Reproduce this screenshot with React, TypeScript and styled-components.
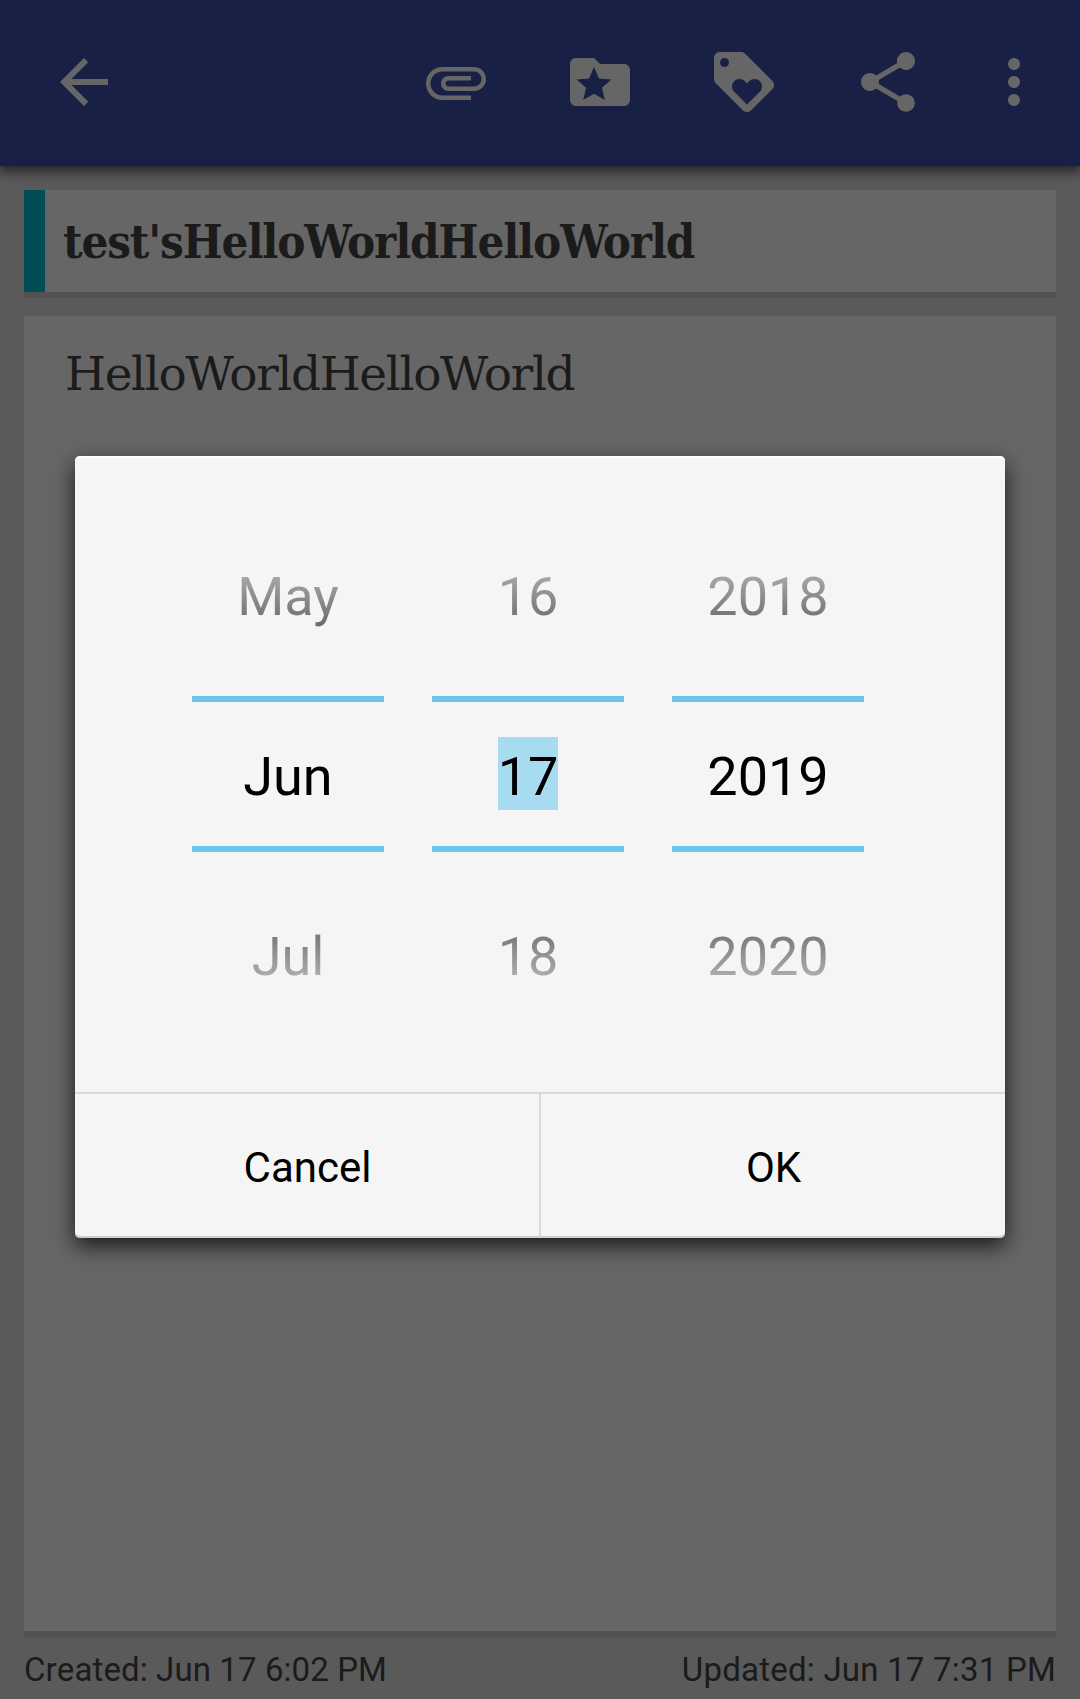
import React from "react";
import styled, { createGlobalStyle } from "styled-components";

const Global = createGlobalStyle`
  * { box-sizing: border-box; }
  body { margin: 0; background: #5a5a5a; font-family: Roboto, sans-serif; }
`;

const Screen = styled.div`
  position: relative;
  width: 1080px;
  height: 1699px;
  overflow: hidden;
  display: flex;
  flex-direction: column;
  background: #5a5a5a;
  color: #1b1b1b;
`;

const AppBar = styled.header`
  flex: none;
  height: 166px;
  display: flex;
  align-items: center;
  padding: 0 30px 2px 48px;
  background: #192046;
  box-shadow: 0 3px 12px 2px rgba(0, 0, 0, 0.66);
`;

const Actions = styled.nav`
  display: flex;
  gap: 72px;
  margin-left: auto;
  margin-right: 54px;
`;

const IconButton = styled.button`
  display: block;
  width: 72px;
  height: 72px;
  padding: 0;
  border: 0;
  background: none;
  color: #666;
`;

const Glyph = styled.svg`
  display: block;
  width: 72px;
  height: 72px;
  fill: currentColor;
`;

const Note = styled.main`
  flex: 1;
  display: flex;
  flex-direction: column;
  padding: 24px 24px 0;
`;

const Card = styled.section`
  background: #666;
  border-bottom: 6px solid #525252;
`;

const TitleCard = styled(Card)`
  display: flex;
  height: 108px;
  margin-bottom: 18px;
`;

const ColorTag = styled.div`
  width: 21px;
  background: #004d57;
`;

const Title = styled.h1`
  margin: 0;
  padding: 17px 0 0 18px;
  font: 700 47px/70px "Roboto Slab", "DejaVu Serif", serif;
  font-stretch: condensed;
  white-space: nowrap;
  letter-spacing: -1.12px;
`;

const BodyCard = styled(Card)`
  height: 1321px;
`;

const BodyText = styled.p`
  margin: 0;
  padding: 23px 0 0 41px;
  font: 400 47px/70px "Roboto Slab", "DejaVu Serif", serif;
  white-space: nowrap;
  letter-spacing: -1.35px;
`;

const Footer = styled.footer`
  display: flex;
  justify-content: space-between;
  padding-top: 13px;
  font-size: 33px;
  line-height: 40px;
  font-kerning: none;
`;

const Stamp = styled.span<{ $tracking: number }>`
  letter-spacing: ${(p) => p.$tracking}px;
`;

const Dialog = styled.div`
  position: absolute;
  left: 75px;
  top: 456px;
  width: 930px;
  height: 782px;
  display: flex;
  flex-direction: column;
  border-radius: 5px;
  background: #f5f5f5;
  color: #000;
  box-shadow: inset 0 2px 0 #fff, inset 0 -2px 0 #cecece,
    0 8px 21px rgba(0, 0, 0, 0.74);
`;

const Pickers = styled.div`
  height: 636px;
  display: flex;
  gap: 48px;
  padding: 48px 0 0 117px;
`;

const Wheel = styled.div`
  width: 192px;
  height: 540px;
  display: flex;
  flex-direction: column;
  align-items: stretch;
  font-size: 54px;
`;

const Neighbour = styled.div<{ $fade: "top" | "bottom" }>`
  height: 180px;
  display: flex;
  justify-content: center;
  align-items: center;
  mask-image: linear-gradient(to ${(p) => p.$fade}, rgba(0, 0, 0, 0.85), transparent 96%);
`;

const Current = styled.div`
  height: 156px;
  margin: 12px 0;
  display: flex;
  justify-content: center;
  align-items: center;
  border: solid #6bc6ea;
  border-width: 6px 0;
`;

const Value = styled.span<{ $selected?: boolean }>`
  height: 73px;
  margin-bottom: 1px;
  padding-top: 4px;
  line-height: 72px;
  background: ${(p) => (p.$selected ? "#a7dbef" : "transparent")};
`;

const Buttons = styled.div`
  flex: 1;
  display: flex;
  border-top: 2px solid #dadada;
`;

const DialogButton = styled.button`
  flex: 1;
  padding: 2px 0 0 1px;
  border: 0;
  background: none;
  color: #000;
  font: 400 42px Roboto, sans-serif;

  & + & {
    border-left: 2px solid #dadada;
  }
`;

const ICONS = {
  back: "M20 11H7.83l5.59-5.59L12 4l-8 8 8 8 1.41-1.41L7.83 13H20v-2z",
  attachment:
    "M7.5 18C4.46 18 2 15.54 2 12.5S4.46 7 7.5 7H18c2.21 0 4 1.79 4 4s-1.79 4-4 4H9.5C8.12 15 7 13.88 7 12.5S8.12 10 9.5 10H17v1.5H9.5c-.55 0-1 .45-1 1s.45 1 1 1H18c1.38 0 2.5-1.12 2.5-2.5S19.38 8.5 18 8.5H7.5c-2.21 0-4 1.79-4 4s1.79 4 4 4H17V18H7.5z",
  folderStar:
    "M20 6h-8l-2-2H4c-1.1 0-2 .9-2 2v12c0 1.1.9 2 2 2h16c1.1 0 2-.9 2-2V8c0-1.1-.9-2-2-2zM13.6 18L10 15.9 6.4 18l.95-4.1L4.2 11.15l4.15-.35L10 7l1.65 3.8 4.15.35-3.15 2.75z",
  loyalty:
    "M21.41 11.58l-9-9C12.05 2.22 11.55 2 11 2H4c-1.1 0-2 .9-2 2v7c0 .55.22 1.05.59 1.42l9 9c.36.36.86.58 1.41.58.55 0 1.05-.22 1.41-.59l7-7c.37-.36.59-.86.59-1.41 0-.55-.23-1.06-.59-1.42zM5.5 7C4.67 7 4 6.33 4 5.5S4.67 4 5.5 4 7 4.67 7 5.5 6.33 7 5.5 7zm11.77 8.27L13 19.54l-4.27-4.27C8.28 14.81 8 14.19 8 13.5c0-1.38 1.12-2.5 2.5-2.5.69 0 1.32.28 1.77.74l.73.72.73-.73c.45-.45 1.08-.73 1.77-.73 1.38 0 2.5 1.12 2.5 2.5 0 .69-.28 1.32-.73 1.77z",
  share:
    "M18 16.08c-.76 0-1.44.3-1.96.77L8.91 12.7c.05-.23.09-.46.09-.7s-.04-.47-.09-.7l7.05-4.11c.54.5 1.25.81 2.04.81 1.66 0 3-1.34 3-3s-1.34-3-3-3-3 1.34-3 3c0 .24.04.47.09.7L8.04 9.81C7.5 9.31 6.79 9 6 9c-1.66 0-3 1.34-3 3s1.34 3 3 3c.79 0 1.5-.31 2.04-.81l7.12 4.16c-.05.21-.08.43-.08.65 0 1.61 1.31 2.92 2.92 2.92s2.92-1.31 2.92-2.92-1.31-2.92-2.92-2.92z",
  more: "M12 8c1.1 0 2-.9 2-2s-.9-2-2-2-2 .9-2 2 .9 2 2 2zm0 2c-1.1 0-2 .9-2 2s.9 2 2 2 2-.9 2-2-.9-2-2-2zm0 6c-1.1 0-2 .9-2 2s.9 2 2 2 2-.9 2-2-.9-2-2-2z",
};

type IconName = keyof typeof ICONS;

function BarIcon({ name, label }: { name: IconName; label: string }) {
  return (
    <IconButton aria-label={label}>
      <Glyph viewBox="0 0 24 24">
        <path fillRule="evenodd" d={ICONS[name]} />
      </Glyph>
    </IconButton>
  );
}

const WHEELS = [
  { previous: "May", current: "Jun", next: "Jul" },
  { previous: "16", current: "17", next: "18", selected: true },
  { previous: "2018", current: "2019", next: "2020" },
];

export default function App() {
  return (
    <>
      <Global />
      <Screen>
        <AppBar>
          <BarIcon name="back" label="Back" />
          <Actions>
            <BarIcon name="attachment" label="Attach" />
            <BarIcon name="folderStar" label="Category" />
            <BarIcon name="loyalty" label="Tag" />
            <BarIcon name="share" label="Share" />
          </Actions>
          <BarIcon name="more" label="More" />
        </AppBar>
        <Note>
          <TitleCard>
            <ColorTag />
            <Title>test'sHelloWorldHelloWorld</Title>
          </TitleCard>
          <BodyCard>
            <BodyText>HelloWorldHelloWorld</BodyText>
          </BodyCard>
          <Footer>
            <Stamp $tracking={0.1}>Created: Jun 17 6:02 PM</Stamp>
            <Stamp $tracking={0.22}>Updated: Jun 17 7:31 PM</Stamp>
          </Footer>
        </Note>
        <Dialog role="dialog">
          <Pickers>
            {WHEELS.map((wheel) => (
              <Wheel key={wheel.current}>
                <Neighbour $fade="top">
                  <Value>{wheel.previous}</Value>
                </Neighbour>
                <Current>
                  <Value $selected={wheel.selected}>{wheel.current}</Value>
                </Current>
                <Neighbour $fade="bottom">
                  <Value>{wheel.next}</Value>
                </Neighbour>
              </Wheel>
            ))}
          </Pickers>
          <Buttons>
            <DialogButton>Cancel</DialogButton>
            <DialogButton>OK</DialogButton>
          </Buttons>
        </Dialog>
      </Screen>
    </>
  );
}
